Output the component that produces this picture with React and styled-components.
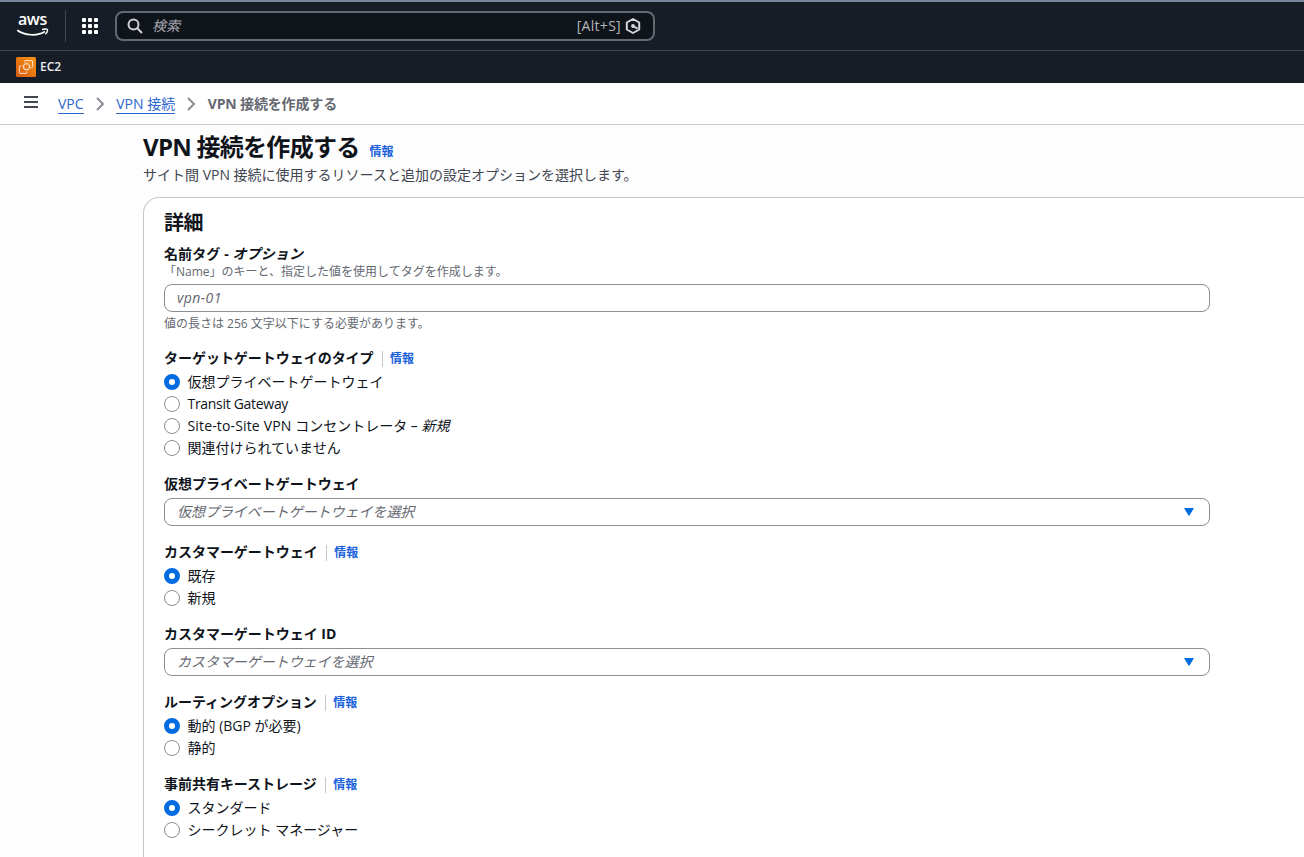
import React from "react";
import styled, { createGlobalStyle, css } from "styled-components";

const GlobalStyle = createGlobalStyle`
  * { box-sizing: border-box; }
  html, body { margin: 0; background: #fdfdfd; }
  body {
    font-family: "Open Sans", "Noto Sans CJK JP", sans-serif;
    font-size: 14px;
    line-height: 20px;
    color: #0f141a;
  }
  h1, h2, p { margin: 0; }
`;

const Page = styled.div`
  height: 857px;
  overflow: hidden;
  display: flex;
  flex-direction: column;
`;

const TopBar = styled.header`
  flex: none;
  height: 51px;
  display: flex;
  align-items: center;
  padding: 0 0 0 16px;
  background: #161d26;
  border-top: 2px solid #7886a0;
  border-bottom: 1px solid #424650;
`;

const Logo = styled.div`
  width: 33px;
  height: 24px;
  display: flex;
  flex-direction: column;
  align-items: center;
`;

const LogoWord = styled.span`
  height: 14px;
  line-height: 11px;
  font-size: 16px;
  font-weight: 600;
  letter-spacing: -0.3px;
  color: #fff;
`;

const TopDivider = styled.span`
  width: 1px;
  height: 32px;
  margin: 0 15px 0 16px;
  background: #424650;
`;

const SearchBox = styled.div`
  width: 540px;
  height: 30px;
  margin-left: 16px;
  padding: 0 12px 0 10px;
  display: flex;
  align-items: center;
  border: 2px solid #656871;
  border-radius: 8px;
  background: #0f141a;
  color: #b4b4bb;
`;

const SearchPlaceholder = styled.span`
  flex: 1;
  margin-left: 9px;
  font-style: italic;
  color: #a4a4ad;
`;

const Shortcut = styled.span`
  margin-right: 4px;
  letter-spacing: 0.3px;
`;

const FavoritesBar = styled.nav`
  flex: none;
  height: 32px;
  display: flex;
  align-items: center;
  gap: 4px;
  padding-left: 16px;
  background: #161d26;
  color: #ebebf0;
  font-size: 12px;
  font-weight: 600;
`;

const BreadcrumbBar = styled.nav`
  flex: none;
  height: 42px;
  display: flex;
  align-items: center;
  padding-left: 24px;
  background: #fff;
  border-bottom: 1px solid #c6c6cd;
`;

const MenuIcon = styled.svg`
  margin: 0 20px 4px 0;
`;

const CrumbLink = styled.a`
  height: 20px;
  line-height: 19px;
  color: #2c66d0;
  border-bottom: 1px solid #2c66d0;
`;

const Chevron = styled.svg`
  margin: 0 11.3px;
`;

const CurrentCrumb = styled.span`
  color: #656871;
  font-weight: 700;
  letter-spacing: -0.15px;
`;

const Main = styled.main`
  flex: 1;
  min-height: 0;
  display: flex;
  flex-direction: column;
  padding: 7px 0 0 143px;
`;

const TitleRow = styled.div`
  display: flex;
  align-items: baseline;
  height: 31px;
`;

const Title = styled.h1`
  font-size: 24px;
  line-height: 30px;
  font-weight: 700;
  letter-spacing: -0.72px;
`;

const InfoLink = styled.a`
  font-size: 12px;
  line-height: 16px;
  font-weight: 700;
  color: #1a62dc;
  ${(p) =>
    p.$divided
      ? css`
          margin: 2px 0 0 8px;
          padding-left: 7.5px;
          border-left: 1px solid #c6c6cd;
        `
      : css`
          margin-left: 10px;
        `}
`;

const Subtitle = styled.p`
  margin-top: 2px;
  color: #424650;
`;

const Card = styled.section`
  flex: 1;
  margin-top: 12px;
  padding: 13px 94px 0 20px;
  background: #fff;
  border: 1px solid #c6c6cd;
  border-width: 1px 0 0 1px;
  border-top-left-radius: 16px;
`;

const CardTitle = styled.h2`
  font-size: 20px;
  line-height: 24px;
  font-weight: 700;
  letter-spacing: -0.6px;
`;

const Form = styled.div`
  display: flex;
  flex-direction: column;
  gap: 16px;
  margin-top: 9px;
`;

const Field = styled.div`
  display: flex;
  flex-direction: column;
`;

const FieldLabel = styled.div`
  height: 20px;
  display: flex;
  align-items: center;
  font-weight: 700;
  white-space: pre;
  letter-spacing: ${(p) => p.$tracking || "-0.03px"};
`;

const Hint = styled.div`
  height: 16px;
  font-size: 12px;
  line-height: 16px;
  color: #656871;
`;

const Control = styled.div`
  height: 28px;
  margin: 4px 0 ${(p) => (p.$hinted ? "4px" : "0")};
  padding: 0 15px 0 12px;
  display: flex;
  align-items: center;
  justify-content: space-between;
  border: 1px solid #8c8c94;
  border-radius: 8px;
  background: #fff;
  color: #656871;
  font-style: italic;
  letter-spacing: ${(p) => (p.$hinted ? "0.4px" : "-0.04px")};
`;

const RadioList = styled.div`
  display: flex;
  flex-direction: column;
  gap: 2px;
  margin-top: 4px;
`;

const RadioRow = styled.div`
  height: 20px;
  display: flex;
  align-items: center;
  gap: 7.5px;
`;

const RadioMark = styled.span`
  flex: none;
  width: 16px;
  height: 16px;
  border-radius: 50%;
  background: #fff;
  border: ${(p) => (p.$on ? "5px solid #006ce0" : "1px solid #8c8c94")};
`;

const Tracked = styled.span`
  letter-spacing: ${(p) => p.$by};
`;

const AwsLogo = () => (
  <Logo>
    <LogoWord>aws</LogoWord>
    <svg width="33" height="9" fill="none" stroke="#fff">
      <path d="M1.3 2.2C9 7.8 21.5 8.3 29 3.5" strokeWidth="1.7" />
      <path d="M26 1.6c2.2-.8 4.9-.7 5.3 0s-.3 2.9-1.9 4.6" strokeWidth="1.4" />
    </svg>
  </Logo>
);

const AppsIcon = () => (
  <svg width="18" height="18" fill="#fff">
    {[1, 7, 13].map((y) => [1, 7, 13].map((x) => <rect key={`${x}-${y}`} x={x} y={y} width="4" height="4" rx="1" />))}
  </svg>
);

const SearchIcon = () => (
  <svg width="16" height="16" fill="none" stroke="#d0d0d6" strokeWidth="2">
    <circle cx="6.5" cy="6.5" r="5" />
    <path d="M10.3 10.3L15 15" />
  </svg>
);

const AssistantIcon = () => (
  <svg width="16" height="18" viewBox="0 0 16 18" fill="none" stroke="#d5d5db" strokeWidth="2">
    <path d="M8 2l6.2 3.5v7L8 16l-6.2-3.5v-7z" strokeLinejoin="round" />
    <path d="M8 9l4.5 2.6" />
    <circle cx="8" cy="9" r="1.2" fill="#d5d5db" strokeWidth="1.4" />
  </svg>
);

const Ec2Icon = () => (
  <svg width="20" height="20">
    <defs>
      <linearGradient id="ec2" x1="0" y1="1" x2="1" y2="0">
        <stop offset="0" stopColor="#d65a12" />
        <stop offset="1" stopColor="#fa9414" />
      </linearGradient>
    </defs>
    <rect width="20" height="20" rx="1.5" fill="url(#ec2)" />
    <g fill="none" stroke="#fff" strokeWidth=".8">
      <path d="M8.6 5.2V4.6q0-1 1-1h6q1 0 1 1v5q0 1-1 1h-.8" />
      <rect x="7.8" y="7" width="5.4" height="5.4" rx="1.4" />
      <path d="M5.4 9H4.3q-1 0-1 1v5.4q0 1 1 1h5.4q1 0 1-1v-1" />
      <path d="M9.4 5.6V7M11.6 5.6V7M13.2 8.6h1.4M13.2 10.8h1.4M6.4 8.6h1.4M6.4 10.8h1.4M9.4 12.4v1.4M11.6 12.4v1.4" strokeWidth=".6" />
    </g>
  </svg>
);

const CrumbChevron = () => (
  <Chevron width="10" height="14" fill="none" stroke="#8c8c94" strokeWidth="2">
    <path d="M2 1l6 6-6 6" />
  </Chevron>
);

const Caret = () => (
  <svg width="10" height="8" fill="#006ce0" stroke="#006ce0" strokeLinejoin="round">
    <path d="M.7.5h8.6L5 7.4z" />
  </svg>
);

const RadioField = ({ label, options }) => (
  <Field>
    <FieldLabel>
      {label}
      <InfoLink $divided>情報</InfoLink>
    </FieldLabel>
    <RadioList>
      {options.map((option, i) => (
        <RadioRow key={i}>
          <RadioMark $on={i === 0} />
          <span>{option}</span>
        </RadioRow>
      ))}
    </RadioList>
  </Field>
);

const SelectField = ({ label, placeholder }) => (
  <Field>
    <FieldLabel>{label}</FieldLabel>
    <Control>
      {placeholder}
      <Caret />
    </Control>
  </Field>
);

export default function App() {
  return (
    <Page lang="ja">
      <GlobalStyle />
      <TopBar>
        <AwsLogo />
        <TopDivider />
        <AppsIcon />
        <SearchBox>
          <SearchIcon />
          <SearchPlaceholder>検索</SearchPlaceholder>
          <Shortcut>[Alt+S]</Shortcut>
          <AssistantIcon />
        </SearchBox>
      </TopBar>
      <FavoritesBar>
        <Ec2Icon />
        EC2
      </FavoritesBar>
      <BreadcrumbBar>
        <MenuIcon width="14" height="12" fill="#424650">
          <path d="M0 0h14v2H0zM0 5h14v2H0zM0 10h14v2H0z" />
        </MenuIcon>
        <CrumbLink>VPC</CrumbLink>
        <CrumbChevron />
        <CrumbLink>VPN 接続</CrumbLink>
        <CrumbChevron />
        <CurrentCrumb>VPN 接続を作成する</CurrentCrumb>
      </BreadcrumbBar>
      <Main>
        <TitleRow>
          <Title>VPN 接続を作成する</Title>
          <InfoLink>情報</InfoLink>
        </TitleRow>
        <Subtitle>サイト間 VPN 接続に使用するリソースと追加の設定オプションを選択します。</Subtitle>
        <Card>
          <CardTitle>詳細</CardTitle>
          <Form>
            <Field>
              <FieldLabel $tracking="0.1px">名前タグ - <i>オプション</i></FieldLabel>
              <Hint>「Name」のキーと、指定した値を使用してタグを作成します。</Hint>
              <Control $hinted>vpn-01</Control>
              <Hint>値の長さは 256 文字以下にする必要があります。</Hint>
            </Field>
            <RadioField
              label="ターゲットゲートウェイのタイプ"
              options={[
                "仮想プライベートゲートウェイ",
                <Tracked $by="-0.3px">Transit Gateway</Tracked>,
                <><Tracked $by="0.15px">Site-to-Site VPN </Tracked>コンセントレータ – <i>新規</i></>,
                "関連付けられていません",
              ]}
            />
            <SelectField label="仮想プライベートゲートウェイ" placeholder="仮想プライベートゲートウェイを選択" />
            <RadioField label="カスタマーゲートウェイ" options={["既存", "新規"]} />
            <SelectField label="カスタマーゲートウェイ ID" placeholder="カスタマーゲートウェイを選択" />
            <RadioField label="ルーティングオプション" options={["動的 (BGP が必要)", "静的"]} />
            <RadioField label="事前共有キーストレージ" options={["スタンダード", "シークレット マネージャー"]} />
          </Form>
        </Card>
      </Main>
    </Page>
  );
}
